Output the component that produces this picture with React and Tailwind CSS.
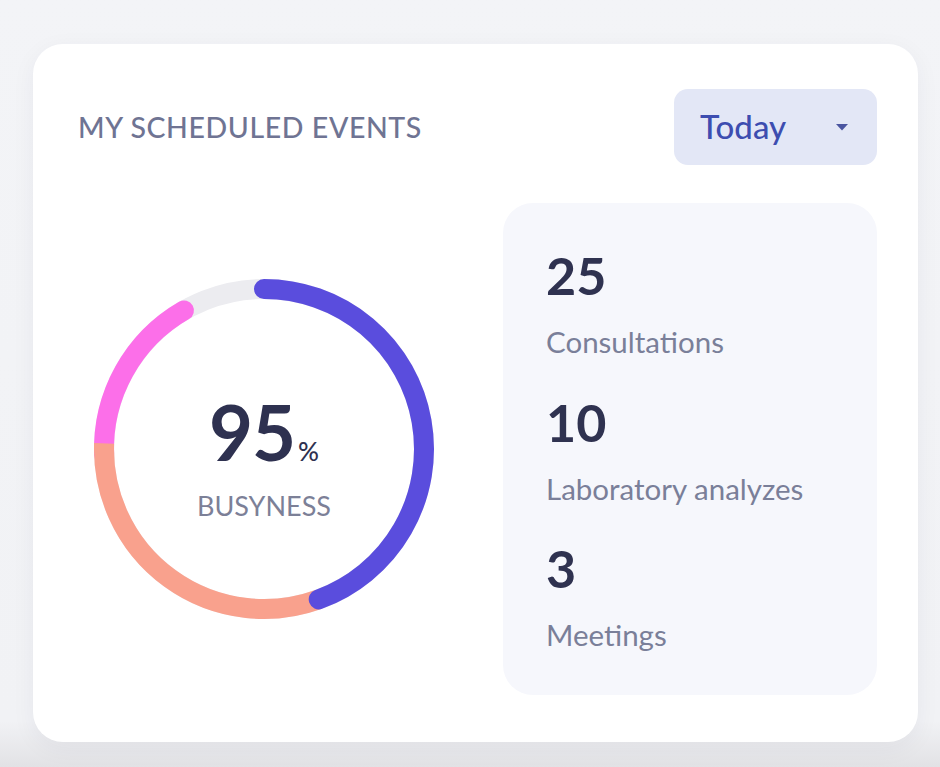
import React from 'react';

const CX = 172;
const CY = 172;
const R = 160;

function pt(deg) {
  const a = (deg * Math.PI) / 180;
  return [CX + R * Math.sin(a), CY - R * Math.cos(a)];
}

function arc(from, to) {
  const [x1, y1] = pt(from);
  const [x2, y2] = pt(to);
  const large = to - from > 180 ? 1 : 0;
  return `M ${x1} ${y1} A ${R} ${R} 0 ${large} 1 ${x2} ${y2}`;
}

const stats = [
  { value: '25', label: 'Consultations' },
  { value: '10', label: 'Laboratory analyzes' },
  { value: '3', label: 'Meetings' },
];

function BusynessRing() {
  return (
    <div className="relative h-[344px] w-[344px]">
      <svg width="344" height="344" viewBox="0 0 344 344">
        <circle cx={CX} cy={CY} r={R} fill="none" stroke="#ececf0" strokeWidth="20" />
        <path d={arc(268, 330)} fill="none" stroke="#fc6fe9" strokeWidth="20" strokeLinecap="round" />
        <path d={arc(160, 272)} fill="none" stroke="#f9a18d" strokeWidth="20" />
        <path d={arc(0, 160)} fill="none" stroke="#5a4ddd" strokeWidth="20" strokeLinecap="round" />
      </svg>
      <div className="absolute inset-0 flex flex-col items-center justify-center pt-[14px]">
        <div className="flex items-baseline leading-none text-[#2e3150]">
          <span className="text-[76px] font-bold tracking-[-1px]">95</span>
          <span className="ml-[3px] text-[26px] font-medium">%</span>
        </div>
        <div className="mt-[22px] text-[27px] leading-none text-[#7c8097]">BUSYNESS</div>
      </div>
    </div>
  );
}

export default function App() {
  return (
    <div
      className="min-h-screen bg-linear-to-b from-[#f3f4f7] via-[#f1f2f5] via-[94%] to-[#e2e2e5] pl-[33px] pt-[44px]"
      style={{ fontFamily: 'Lato, "Open Sans", sans-serif' }}
    >
      <div className="h-[698px] w-[885px] rounded-[30px] bg-white pl-[45px] pr-[41px] pt-[45px] shadow-[0_6px_24px_rgba(40,40,70,0.05)]">
        <div className="flex h-[76px] items-center justify-between">
          <h2 className="text-[28.5px] font-medium tracking-[0.6px] text-[#6f7493]">MY SCHEDULED EVENTS</h2>
          <button className="flex h-[76px] w-[203px] items-center justify-between rounded-[14px] bg-[#e3e7f6] pl-[26px] pr-[29px]">
            <span className="text-[33px] font-medium text-[#3d4db0]">Today</span>
            <svg width="12" height="7" viewBox="0 0 12 7">
              <path d="M0 0 L12 0 L6 6.5 Z" fill="#4a55a0" />
            </svg>
          </button>
        </div>

        <div className="mt-[38px] flex items-center">
          <div className="flex-1 pl-[14px]">
            <BusynessRing />
          </div>
          <div className="flex h-[492px] w-[374px] flex-col gap-[39px] rounded-[30px] bg-[#f6f7fc] pl-[43px] pt-[46px]">
            {stats.map((s) => (
              <div key={s.label}>
                <div className="text-[52px] font-bold leading-none text-[#2f3250]">{s.value}</div>
                <div className="mt-[26px] text-[29.5px] leading-none text-[#7a7f99]">{s.label}</div>
              </div>
            ))}
          </div>
        </div>
      </div>
    </div>
  );
}
